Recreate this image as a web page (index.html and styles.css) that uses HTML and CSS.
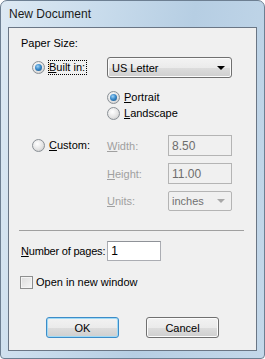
FILE: index.html
```html
<!DOCTYPE html>
<html lang="en">
<head>
    <meta charset="UTF-8">
    <title>New Document</title>
    <link rel="stylesheet" href="styles.css">
</head>
<body>
    <div class="window">
        <div class="titlebar">New Document</div>

        <div class="client">
            <div class="group-label">Paper Size:</div>

            <div class="builtin-row">
                <label class="radio checked">
                    <span class="dot"></span>
                    <span class="focus"><u>B</u>uilt in:</span>
                </label>
                <div class="select">
                    <span>US Letter</span>
                    <span class="arrow"></span>
                </div>
            </div>

            <div class="orient">
                <label class="radio checked"><span class="dot"></span><span><u>P</u>ortrait</span></label>
                <label class="radio"><span class="dot"></span><span><u>L</u>andscape</span></label>
            </div>

            <div class="custom">
                <label class="radio"><span class="dot"></span><span><u>C</u>ustom:</span></label>
                <span class="dim"><u>W</u>idth:</span>
                <span class="field disabled">8.50</span>

                <span></span>
                <span class="dim"><u>H</u>eight:</span>
                <span class="field disabled">11.00</span>

                <span></span>
                <span class="dim"><u>U</u>nits:</span>
                <span class="field disabled units">inches <span class="arrow grey"></span></span>
            </div>

            <div class="sep"></div>

            <div class="pages-row">
                <span class="pages-label"><u>N</u>umber of pages:</span>
                <span class="field pages">1</span>
            </div>

            <label class="check"><span class="box"></span>Open in new window</label>

            <div class="buttons">
                <button class="btn default">OK</button>
                <button class="btn">Cancel</button>
            </div>
        </div>
    </div>
</body>
</html>
```

FILE: styles.css
```css
* {
    margin: 0;
    padding: 0;
    box-sizing: border-box;
}

body {
    background: #ffffff;
    font-family: 'Liberation Sans', Arial, sans-serif;
    font-size: 11px;
    color: #000;
}

.window {
    width: 265px;
    height: 359px;
    padding: 0 7px 7px 7px;
    border: 1px solid #6d7f92;
    border-radius: 7px 7px 4px 4px;
    background: linear-gradient(100deg, #dde9f3 0%, #c9dcec 30%, #b6cee3 60%, #c4d8ea 100%);
    display: flex;
    flex-direction: column;
}

.titlebar {
    height: 26px;
    line-height: 26px;
    padding-left: 1px;
    font-size: 12px;
    color: #1b1b1b;
}

.client {
    flex-grow: 1;
    background: #f0f0f0;
    border: 1px solid #6a7685;
    padding: 9px 12px 0 12px;
    display: flex;
    flex-direction: column;
}

.group-label {
    line-height: 13px;
}

u {
    text-decoration: underline;
    text-underline-offset: 1px;
}

/* radios and checkbox */
.radio {
    display: flex;
    align-items: center;
    gap: 4px;
    line-height: 13px;
}

.dot {
    width: 13px;
    height: 13px;
    border-radius: 50%;
    border: 1px solid #8a9096;
    background: radial-gradient(circle at 40% 35%, #ffffff 0%, #e4e4e4 55%, #c2c2c2 100%);
    flex-shrink: 0;
    position: relative;
}

.checked .dot::after {
    content: '';
    position: absolute;
    left: 2px;
    top: 2px;
    width: 7px;
    height: 7px;
    border-radius: 50%;
    background: radial-gradient(circle at 40% 35%, #9fd3f5 0%, #3a8acb 45%, #124c7e 100%);
}

.focus {
    outline: 1px dotted #000;
    outline-offset: 0;
    padding: 0 1px 0 0;
}

.builtin-row {
    display: grid;
    grid-template-columns: 86px 125px;
    align-items: center;
    margin-top: 7px;
}

.builtin-row .radio {
    padding-left: 11px;
}

.select {
    height: 21px;
    border: 1px solid #707070;
    border-radius: 3px;
    background: linear-gradient(#f3f3f3 0%, #ebebeb 50%, #dddddd 51%, #cfcfcf 100%);
    box-shadow: inset 0 0 0 1px #fbfbfb;
    display: flex;
    align-items: center;
    justify-content: space-between;
    padding: 0 6px 0 4px;
}

.arrow {
    width: 0;
    height: 0;
    border-left: 4px solid transparent;
    border-right: 4px solid transparent;
    border-top: 4px solid #000;
}

.arrow.grey {
    border-top-color: #a8a8a8;
}

.orient {
    margin-top: 11px;
    margin-left: 86px;
    display: flex;
    flex-direction: column;
}

.orient .radio {
    height: 16px;
}

.custom {
    display: grid;
    grid-template-columns: 86px 61px 64px;
    grid-template-rows: 21px 21px 20px;
    row-gap: 7px;
    align-items: center;
    margin-top: 14px;
}

.custom .radio {
    padding-left: 11px;
}

.dim {
    color: #a0a0a0;
}

.field {
    height: 100%;
    border: 1px solid #abadb3;
    border-top-color: #8f9298;
    background: #fff;
    display: flex;
    align-items: center;
    padding-left: 3px;
    font-size: 12px;
}

.field.disabled {
    background: #f0f0f0;
    border-color: #b4b4b4;
    color: #6d6d6d;
}

.field.units {
    justify-content: space-between;
    padding-right: 6px;
    border-radius: 2px;
    color: #707070;
    font-size: 11px;
}

.sep {
    height: 1px;
    background: #a0a0a0;
    margin: 19px 0 0 -2px;
}

.pages-row {
    display: flex;
    align-items: center;
    gap: 2px;
    margin-top: 10px;
}

.pages-label {
    letter-spacing: -0.2px;
}

.field.pages {
    width: 54px;
    height: 20px;
}

.check {
    display: flex;
    align-items: center;
    gap: 3px;
    margin-top: 15px;
    margin-left: -1px;
    line-height: 13px;
}

.box {
    width: 13px;
    height: 13px;
    border: 1px solid #8e8f8f;
    background: linear-gradient(135deg, #dcdcdc, #f6f6f6);
    box-shadow: inset 0 0 0 1px #f4f4f4;
}

.buttons {
    display: flex;
    justify-content: center;
    gap: 27px;
    margin-top: 28px;
}

.btn {
    width: 73px;
    height: 21px;
    border: 1px solid #707070;
    border-radius: 3px;
    background: linear-gradient(#f2f2f2 0%, #ebebeb 50%, #dddddd 51%, #cfcfcf 100%);
    box-shadow: inset 0 0 0 1px #fcfcfc;
    font-family: 'Liberation Sans', Arial, sans-serif;
    font-size: 11px;
    color: #000;
}

.btn.default {
    border-color: #3c8cc8;
    box-shadow: inset 0 0 0 1px #9fdaf6;
}
```
